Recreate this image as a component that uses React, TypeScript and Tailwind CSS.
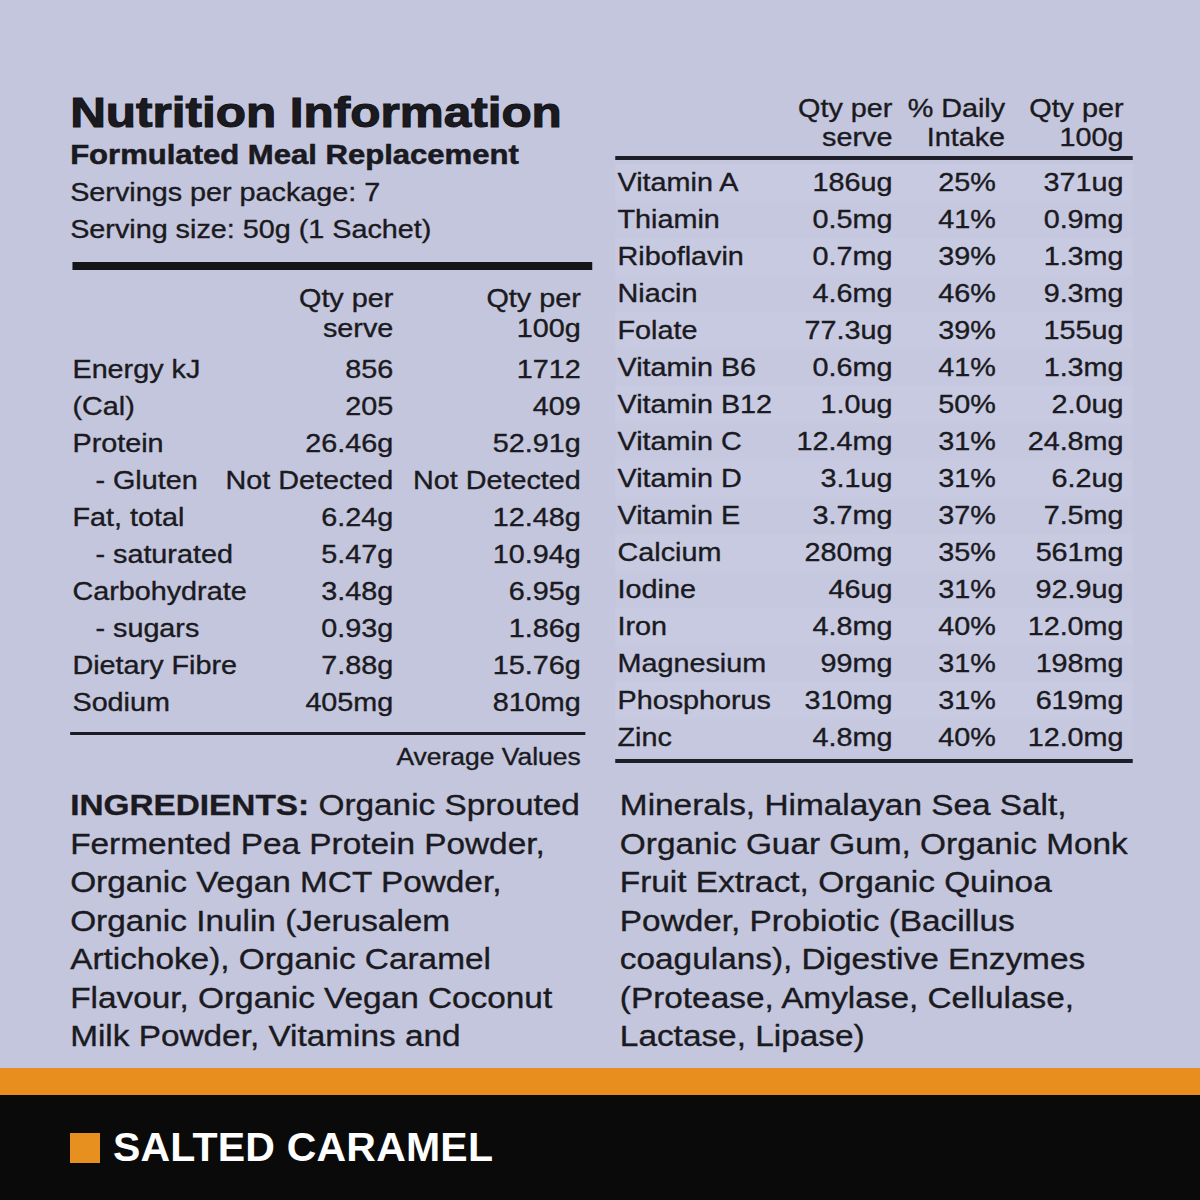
import React from "react";

const leftRows: [string, string, string, boolean][] = [
  ["Energy kJ", "856", "1712", false],
  ["(Cal)", "205", "409", false],
  ["Protein", "26.46g", "52.91g", false],
  ["- Gluten", "Not Detected", "Not Detected", true],
  ["Fat, total", "6.24g", "12.48g", false],
  ["- saturated", "5.47g", "10.94g", true],
  ["Carbohydrate", "3.48g", "6.95g", false],
  ["- sugars", "0.93g", "1.86g", true],
  ["Dietary Fibre", "7.88g", "15.76g", false],
  ["Sodium", "405mg", "810mg", false],
];

const rightRows: [string, string, string, string][] = [
  ["Vitamin A", "186ug", "25%", "371ug"],
  ["Thiamin", "0.5mg", "41%", "0.9mg"],
  ["Riboflavin", "0.7mg", "39%", "1.3mg"],
  ["Niacin", "4.6mg", "46%", "9.3mg"],
  ["Folate", "77.3ug", "39%", "155ug"],
  ["Vitamin B6", "0.6mg", "41%", "1.3mg"],
  ["Vitamin B12", "1.0ug", "50%", "2.0ug"],
  ["Vitamin C", "12.4mg", "31%", "24.8mg"],
  ["Vitamin D", "3.1ug", "31%", "6.2ug"],
  ["Vitamin E", "3.7mg", "37%", "7.5mg"],
  ["Calcium", "280mg", "35%", "561mg"],
  ["Iodine", "46ug", "31%", "92.9ug"],
  ["Iron", "4.8mg", "40%", "12.0mg"],
  ["Magnesium", "99mg", "31%", "198mg"],
  ["Phosphorus", "310mg", "31%", "619mg"],
  ["Zinc", "4.8mg", "40%", "12.0mg"],
];

const leftIngredients = [
  "Fermented Pea Protein Powder,",
  "Organic Vegan MCT Powder,",
  "Organic Inulin (Jerusalem",
  "Artichoke), Organic Caramel",
  "Flavour, Organic Vegan Coconut",
  "Milk Powder, Vitamins and",
];

const rightIngredients = [
  "Minerals, Himalayan Sea Salt,",
  "Organic Guar Gum, Organic Monk",
  "Fruit Extract, Organic Quinoa",
  "Powder, Probiotic (Bacillus",
  "coagulans), Digestive Enzymes",
  "(Protease, Amylase, Cellulase,",
  "Lactase, Lipase)",
];

export default function App() {
  return (
    <div className="w-[1200px] h-[1200px] flex flex-col overflow-hidden font-['Liberation_Sans',Arial,sans-serif]">
      <div className="flex-1 bg-[#c4c6de] text-[#1a1a20] overflow-hidden [-webkit-text-stroke:0.35px_#1a1a20]">
        <div className="w-[1044px] origin-left scale-x-[1.15] pl-[61px] pt-[89px]">
          <div className="grid grid-cols-[454px_450px] gap-x-[20px]">
            {/* Left column */}
            <div className="flex flex-col">
              <div className="text-[43px] font-bold leading-[46px] whitespace-nowrap [-webkit-text-stroke:1.1px_#141418]">Nutrition Information</div>
              <div className="mt-[2px] text-[27px] font-bold leading-[37px] whitespace-nowrap [-webkit-text-stroke:0.5px_#141418]">Formulated Meal Replacement</div>
              <div className="text-[25px] leading-[37px] whitespace-nowrap">Servings per package: 7</div>
              <div className="text-[25px] leading-[37px] whitespace-nowrap">Serving size: 50g (1 Sachet)</div>
              <div className="mt-[14px] ml-[2px] h-[8px] bg-[#141418]" />
              <div className="mt-[13px] grid grid-cols-[minmax(0,1fr)_150px_163px] pl-[2px] pr-[10px] text-[25px] leading-[30px]">
                <div />
                <div className="text-right">Qty per<br />serve</div>
                <div className="text-right">Qty per<br />100g</div>
              </div>
              <div className="mt-[8px] flex flex-col pl-[2px] pr-[10px] text-[25px] leading-[37px]">
                {leftRows.map(([n, a, b, indent]) => (
                  <div key={n} className="grid grid-cols-[minmax(0,1fr)_150px_163px]">
                    <div className={"whitespace-nowrap " + (indent ? "pl-[20px]" : "")}>{n}</div>
                    <div className="text-right whitespace-nowrap">{a}</div>
                    <div className="text-right whitespace-nowrap">{b}</div>
                  </div>
                ))}
              </div>
              <div className="mt-[11px] mr-[6px] h-[3px] bg-[#1a1a22]" />
              <div className="mt-[8px] pr-[10px] text-right text-[23px] leading-[28px]">Average Values</div>
            </div>

            {/* Right column */}
            <div className="flex flex-col pt-[5px]">
              <div className="grid grid-cols-[minmax(0,1fr)_95px_90px_111px] pl-[2px] pr-[8px] text-[25px] leading-[29px]">
                <div />
                <div className="text-right whitespace-nowrap">Qty per<br />serve</div>
                <div className="text-right whitespace-nowrap mr-[-8px]">% Daily<br />Intake</div>
                <div className="text-right whitespace-nowrap">Qty per<br />100g</div>
              </div>
              <div className="mt-[4px] h-[4px] bg-[#1e1e28]" />
              <div className="mt-[4px] flex flex-col text-[25px] leading-[37px]">
                {rightRows.map(([n, a, b, c], i) => (
                  <div
                    key={n}
                    className={
                      "grid grid-cols-[minmax(0,1fr)_95px_90px_111px] pl-[2px] pr-[8px] " +
                      (i % 2 === 0 ? "bg-[#c8cae2]" : "bg-[#c6c8e0]")
                    }
                  >
                    <div className="whitespace-nowrap">{n}</div>
                    <div className="text-right whitespace-nowrap">{a}</div>
                    <div className="text-right whitespace-nowrap">{b}</div>
                    <div className="text-right whitespace-nowrap">{c}</div>
                  </div>
                ))}
              </div>
              <div className="mt-[3px] h-[4px] bg-[#1e1e28]" />
            </div>
          </div>

          {/* Ingredients */}
          <div className="mt-[15px] grid grid-cols-[454px_450px] gap-x-[20px] text-[29px] leading-[38.5px]">
            <div className="flex flex-col">
              <div className="whitespace-nowrap">
                <span className="font-bold">INGREDIENTS:</span> Organic Sprouted
              </div>
              {leftIngredients.map((l) => (
                <div key={l} className="whitespace-nowrap">{l}</div>
              ))}
            </div>
            <div className="flex flex-col pl-[4px]">
              {rightIngredients.map((l) => (
                <div key={l} className="whitespace-nowrap">{l}</div>
              ))}
            </div>
          </div>
        </div>
      </div>
      <div className="h-[27px] bg-[#e78e1e]" />
      <div className="h-[105px] bg-[#0a0a0b] flex items-center pl-[70px] gap-[13px]">
        <div className="w-[30px] h-[30px] bg-[#e8901f]" />
        <div className="text-white text-[41px] font-bold leading-none tracking-[0.2px]">SALTED CARAMEL</div>
      </div>
    </div>
  );
}
